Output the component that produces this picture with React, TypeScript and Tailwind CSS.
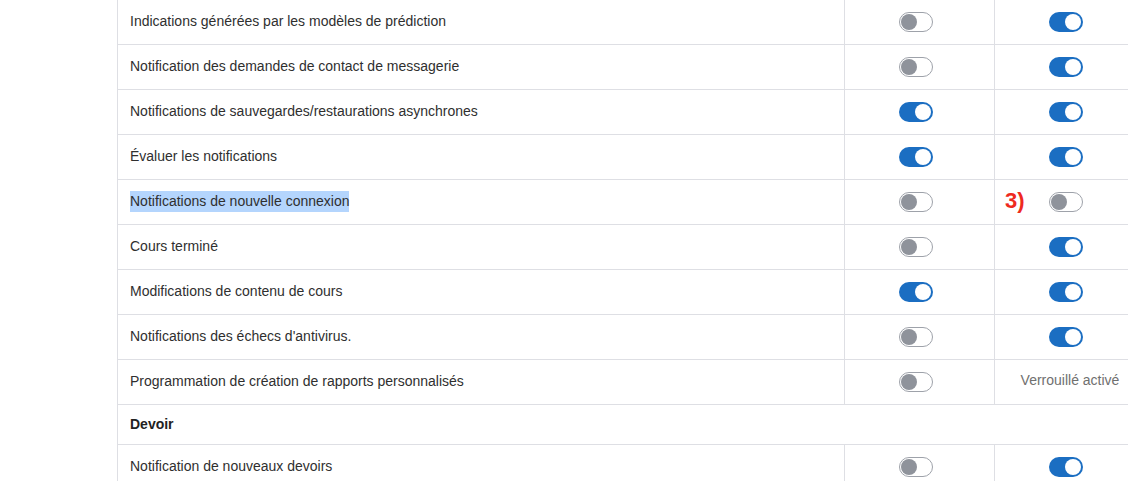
import React from "react";

type Row = { label: string; a: boolean; b: boolean | "locked"; highlight?: boolean; mark?: boolean };

const rows: Row[] = [
  { label: "Indications générées par les modèles de prédiction", a: false, b: true },
  { label: "Notification des demandes de contact de messagerie", a: false, b: true },
  { label: "Notifications de sauvegardes/restaurations asynchrones", a: true, b: true },
  { label: "Évaluer les notifications", a: true, b: true },
  { label: "Notifications de nouvelle connexion", a: false, b: false, highlight: true, mark: true },
  { label: "Cours terminé", a: false, b: true },
  { label: "Modifications de contenu de cours", a: true, b: true },
  { label: "Notifications des échecs d'antivirus.", a: false, b: true },
  { label: "Programmation de création de rapports personnalisés", a: false, b: "locked" },
];

function Toggle({ on }: { on: boolean }) {
  if (on) {
    return (
      <span className="relative mr-2 inline-block h-[20px] w-[34px] rounded-full bg-[#1b6ec2]">
        <span className="absolute right-[2px] top-[2px] h-[16px] w-[16px] rounded-full bg-white" />
      </span>
    );
  }
  return (
    <span className="relative mr-2 inline-block h-[20px] w-[34px] rounded-full border border-[#9ea2aa] bg-white">
      <span className="absolute left-[1px] top-[1px] h-[16px] w-[16px] rounded-full bg-[#8f939b]" />
    </span>
  );
}

export default function App() {
  return (
    <div
      className="flex h-[481px] w-[1128px] overflow-hidden bg-white text-[14px] text-[#2f2f2f]"
      style={{ fontFamily: '"Liberation Sans", Arial, sans-serif' }}
    >
      <div className="w-[117px] shrink-0" />
      <div className="w-[1030px] shrink-0 border-l border-[#dedfe4]">
        {rows.map((r, i) => (
          <div key={i} className="grid h-[45px] grid-cols-[727px_150px_153px] border-b border-[#dedfe4]">
            <div className="flex items-center border-r border-[#dedfe4] pl-[12px] pb-[1px]">
              {r.highlight ? <span className="bg-[#b4d5fd]">{r.label}</span> : <span>{r.label}</span>}
            </div>
            <div className="flex items-center justify-center border-r border-[#dedfe4] pb-[1px]">
              <Toggle on={r.a} />
            </div>
            <div className="relative flex w-[150px] items-center justify-center pb-[1px]">
              {r.mark && (
                <span className="absolute left-[10px] top-[10px] text-[22px] font-bold leading-none text-[#ee2a1e]">
                  3)
                </span>
              )}
              {r.b === "locked" ? (
                <span className="pb-[3px] text-[#707070]">Verrouillé activé</span>
              ) : (
                <Toggle on={r.b} />
              )}
            </div>
          </div>
        ))}
        <div className="flex h-[40px] items-center border-b border-[#dedfe4] pl-[12px] font-bold text-[#222]">
          Devoir
        </div>
        <div className="grid h-[45px] grid-cols-[727px_150px_153px] border-b border-[#dedfe4]">
          <div className="flex items-center border-r border-[#dedfe4] pl-[12px] pb-[1px]">
            <span>Notification de nouveaux devoirs</span>
          </div>
          <div className="flex items-center justify-center border-r border-[#dedfe4] pb-[1px]">
            <Toggle on={false} />
          </div>
          <div className="flex w-[150px] items-center justify-center pb-[1px]">
            <Toggle on={true} />
          </div>
        </div>
      </div>
    </div>
  );
}
